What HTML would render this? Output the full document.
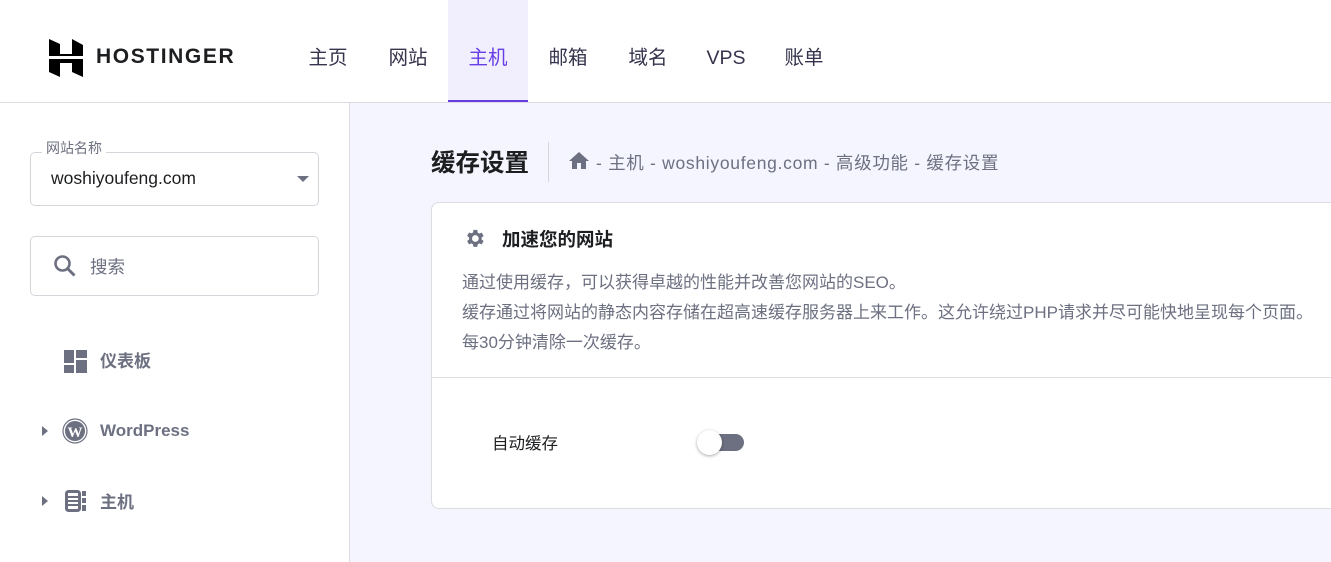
<!DOCTYPE html>
<html><head><meta charset="utf-8"><style>
*{margin:0;padding:0;box-sizing:border-box}
body{width:1331px;height:562px;overflow:hidden;font-family:"Liberation Sans","Noto Sans CJK SC",sans-serif;background:#fff;position:relative;color:#2f1c6a}
.abs{position:absolute}
.hdr{left:0;top:0;width:1331px;height:103px;border-bottom:1px solid #dadce0;background:#fff}
.nav{top:0;height:102px;line-height:116px;font-size:19.5px;color:#36344d;text-align:center}
.side{left:0;top:103px;width:350px;height:459px;border-right:1px solid #dadce0;background:#fff}
.main{left:350px;top:103px;width:981px;height:459px;background:#f4f5ff}
.box{border:1px solid #d5d6dc;border-radius:5px;background:#fff}
.mi{font-size:17px;font-weight:bold;color:#6d7081}
.card{left:431px;top:202px;width:920px;height:307px;border:1px solid #dadce0;border-radius:8px;background:#fff}
.p{font-size:17px;color:#6d7081;left:462px;white-space:nowrap}
</style></head><body>
<div class="abs hdr"></div>
<svg class="abs" style="left:49px;top:39px" width="34" height="38" viewBox="0 0 34 38"><path d="M0 0l11 5v10l12 0V0l11 6v13H0z M0 19h34v19l-11-5v-9H11v14L0 33z" fill="#000"/><path d="M0 17h34v3H0z" fill="#fff"/></svg>
<div class="abs" style="left:96px;top:45px;font-size:21px;font-weight:bold;letter-spacing:1.6px;color:#1d1e20">HOSTINGER</div>
<div class="abs nav" style="left:300px;width:56px">主页</div>
<div class="abs nav" style="left:380px;width:56px">网站</div>
<div class="abs nav" style="left:448px;width:80px;background:#f1effd;color:#673de6;border-bottom:2px solid #673de6">主机</div>
<div class="abs nav" style="left:540px;width:56px">邮箱</div>
<div class="abs nav" style="left:620px;width:56px">域名</div>
<div class="abs nav" style="left:700px;width:52px">VPS</div>
<div class="abs nav" style="left:776px;width:56px">账单</div>

<div class="abs side"></div>
<div class="abs box" style="left:30px;top:152px;width:289px;height:54px"></div>
<div class="abs" style="left:42px;top:138px;font-size:14px;color:#6d7081;background:#fff;padding:0 4px">网站名称</div>
<div class="abs" style="left:51px;top:168px;font-size:17.5px;color:#1d1e20">woshiyoufeng.com</div>
<div class="abs" style="left:297px;top:176px;border-left:6px solid transparent;border-right:6px solid transparent;border-top:6px solid #6d7081"></div>
<div class="abs box" style="left:30px;top:236px;width:289px;height:60px"></div>
<svg class="abs" style="left:53px;top:254px" width="24" height="24" viewBox="0 0 24 24"><circle cx="9.5" cy="9.5" r="7" stroke="#6d7081" stroke-width="2.6" fill="none"/><path d="M14.5 14.5l7 7" stroke="#6d7081" stroke-width="3"/></svg>
<div class="abs" style="left:90px;top:254px;font-size:17.5px;color:#6d7081">搜索</div>

<svg class="abs" style="left:64px;top:350px" width="23" height="23"><rect x="0" y="0" width="10" height="13" fill="#6d7081"/><rect x="0" y="15" width="10" height="8" fill="#6d7081"/><rect x="12" y="0" width="11" height="8" fill="#6d7081"/><rect x="12" y="10" width="11" height="13" fill="#6d7081"/></svg>
<div class="abs mi" style="left:100px;top:347px">仪表板</div>
<div class="abs" style="left:42px;top:426px;border-top:5px solid transparent;border-bottom:5px solid transparent;border-left:6px solid #6d7081"></div>
<svg class="abs" style="left:62px;top:418px" width="26" height="26" viewBox="0 0 26 26"><circle cx="13" cy="13" r="12" fill="none" stroke="#6d7081" stroke-width="1.2"/><circle cx="13" cy="13" r="10" fill="#6d7081"/><text x="13" y="19" font-size="15" font-family="Liberation Serif" font-weight="bold" fill="#fff" text-anchor="middle">W</text></svg>
<div class="abs mi" style="left:100px;top:421px">WordPress</div>
<div class="abs" style="left:42px;top:496px;border-top:5px solid transparent;border-bottom:5px solid transparent;border-left:6px solid #6d7081"></div>
<svg class="abs" style="left:65px;top:490px" width="22" height="22"><rect x="1.5" y="1.5" width="13" height="19" rx="2" fill="none" stroke="#6d7081" stroke-width="3"/><path d="M3 7h11M3 11h11M3 15h11" stroke="#6d7081" stroke-width="2"/><rect x="17" y="1" width="4" height="5" fill="#6d7081"/><rect x="17" y="8" width="4" height="5" fill="#6d7081"/><rect x="17" y="15" width="4" height="6" fill="#6d7081"/></svg>
<div class="abs mi" style="left:100px;top:488px">主机</div>

<div class="abs main"></div>
<div class="abs" style="left:431px;top:144px;font-size:24.5px;font-weight:bold;color:#1d1e20">缓存设置</div>
<div class="abs" style="left:548px;top:142px;width:1px;height:40px;background:#d5d6dc"></div>
<svg class="abs" style="left:569px;top:151px" width="20" height="18" viewBox="0 0 20 18"><path d="M10 1L0 10h3v8h5v-6h4v6h5v-8h3z" fill="#6d7081"/></svg>
<div class="abs" style="left:596px;top:150px;font-size:17.5px;letter-spacing:0.7px;color:#6d7081;white-space:nowrap">- 主机 - woshiyoufeng.com - 高级功能 - 缓存设置</div>

<div class="abs card"></div>
<div class="abs" style="left:432px;top:377px;width:899px;height:1px;background:#dadce0"></div>
<svg class="abs" style="left:463px;top:227px" width="23" height="23" viewBox="0 0 24 24"><path fill="#6d7081" d="M19.4 13a7.5 7.5 0 000-2l2.1-1.6-2-3.5-2.5 1a7.3 7.3 0 00-1.7-1L14.9 3h-4l-.4 2.7a7.3 7.3 0 00-1.7 1l-2.5-1-2 3.5L6.4 11a7.5 7.5 0 000 2l-2.1 1.6 2 3.5 2.5-1a7.3 7.3 0 001.7 1l.4 2.7h4l.4-2.7a7.3 7.3 0 001.7-1l2.5 1 2-3.5zM12.9 15.5a3.5 3.5 0 110-7 3.5 3.5 0 010 7z"/></svg>
<div class="abs" style="left:502px;top:226px;font-size:18.5px;font-weight:bold;color:#1d1e20">加速您的网站</div>
<div class="abs p" style="top:268px">通过使用缓存，可以获得卓越的性能并改善您网站的SEO。</div>
<div class="abs p" style="top:298px">缓存通过将网站的静态内容存储在超高速缓存服务器上来工作。这允许绕过PHP请求并尽可能快地呈现每个页面。</div>
<div class="abs p" style="top:328px">每30分钟清除一次缓存。</div>
<div class="abs" style="left:492px;top:430px;font-size:16.5px;color:#1d1e20">自动缓存</div>
<div class="abs" style="left:704px;top:434px;width:40px;height:17px;border-radius:9px;background:#6d7081"></div>
<div class="abs" style="left:697px;top:430px;width:25px;height:25px;border-radius:50%;background:#fff;box-shadow:0 1px 3px rgba(0,0,0,.35)"></div>
</body></html>
